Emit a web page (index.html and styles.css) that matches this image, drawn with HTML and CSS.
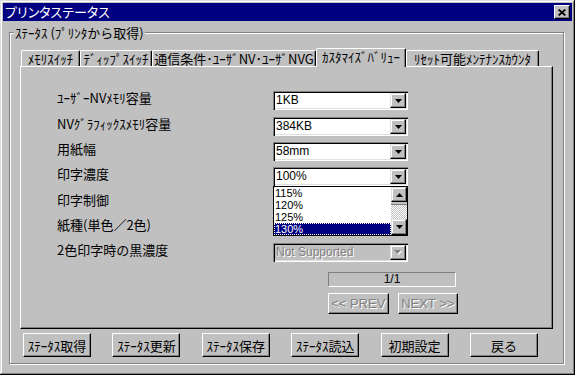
FILE: index.html
```html
<!DOCTYPE html>
<html lang="ja">
<head>
<meta charset="utf-8">
<title>プリンタステータス</title>
<link rel="stylesheet" href="styles.css">
</head>
<body>
<div class="window">
  <div class="titlebar">
    <span class="title">プリンタステータス</span>
    <span class="close"><svg width="8" height="7" viewBox="0 0 8 7"><path d="M0.6 0.5 L7.4 6.5 M7.4 0.5 L0.6 6.5" stroke="#000" stroke-width="1.7" fill="none"/></svg></span>
  </div>
  <div class="group">
    <span class="legend">ｽﾃｰﾀｽ (ﾌﾟﾘﾝﾀから取得)</span>
    <div class="tabs">
      <div class="tab t1">ﾒﾓﾘｽｲｯﾁ</div>
      <div class="tab t2">ﾃﾞｨｯﾌﾟｽｲｯﾁ</div>
      <div class="tab t3">通信条件･ﾕｰｻﾞNV･ﾕｰｻﾞNVG</div>
      <div class="tab t4 active">ｶｽﾀﾏｲｽﾞﾊﾞﾘｭｰ</div>
      <div class="tab t5">ﾘｾｯﾄ可能ﾒﾝﾃﾅﾝｽｶｳﾝﾀ</div>
    </div>
    <div class="panel">
      <div class="form">
        <div class="label">ﾕｰｻﾞｰNVﾒﾓﾘ容量</div>
        <div class="combo"><span class="value">1KB</span><span class="arrow"><svg width="7" height="4" viewBox="0 0 7 4"><polygon points="0,0 7,0 3.5,4" fill="#000"/></svg></span></div>
        <div class="label">NVｸﾞﾗﾌｨｯｸｽﾒﾓﾘ容量</div>
        <div class="combo"><span class="value">384KB</span><span class="arrow"><svg width="7" height="4" viewBox="0 0 7 4"><polygon points="0,0 7,0 3.5,4" fill="#000"/></svg></span></div>
        <div class="label">用紙幅</div>
        <div class="combo"><span class="value">58mm</span><span class="arrow"><svg width="7" height="4" viewBox="0 0 7 4"><polygon points="0,0 7,0 3.5,4" fill="#000"/></svg></span></div>
        <div class="label">印字濃度</div>
        <div class="combo open"><span class="value">100%</span><span class="arrow"><svg width="7" height="4" viewBox="0 0 7 4"><polygon points="0,0 7,0 3.5,4" fill="#000"/></svg></span>
          <div class="list">
            <div class="items">
              <div class="item">115%</div>
              <div class="item">120%</div>
              <div class="item">125%</div>
              <div class="item selected">130%</div>
            </div>
            <div class="scrollbar">
              <span class="sbtn up"><svg width="7" height="4" viewBox="0 0 7 4"><polygon points="0,4 7,4 3.5,0" fill="#000"/></svg></span>
              <span class="thumb"></span>
              <span class="track"></span>
              <span class="sbtn down"><svg width="7" height="4" viewBox="0 0 7 4"><polygon points="0,0 7,0 3.5,4" fill="#000"/></svg></span>
            </div>
          </div>
        </div>
        <div class="label">印字制御</div>
        <div class="empty"></div>
        <div class="label">紙種(単色／2色)</div>
        <div class="empty"></div>
        <div class="label">2色印字時の黒濃度</div>
        <div class="combo disabled"><span class="value">Not Supported</span><span class="arrow"><svg width="8" height="5" viewBox="0 0 8 5"><polygon points="1,1 8,1 4.5,5" fill="#fff"/><polygon points="0,0 7,0 3.5,4" fill="#808080"/></svg></span></div>
      </div>
      <div class="pager">
        <div class="indicator">1/1</div>
        <div class="navbtns">
          <span class="btn nav disabled-text">&lt;&lt; PREV</span>
          <span class="btn nav disabled-text">NEXT &gt;&gt;</span>
        </div>
      </div>
    </div>
    <div class="btnrow">
      <span class="btn action">ｽﾃｰﾀｽ取得</span>
      <span class="btn action">ｽﾃｰﾀｽ更新</span>
      <span class="btn action">ｽﾃｰﾀｽ保存</span>
      <span class="btn action">ｽﾃｰﾀｽ読込</span>
      <span class="btn action">初期設定</span>
      <span class="btn action">戻る</span>
    </div>
  </div>
</div>
</body>
</html>
```

FILE: styles.css
```css
* { box-sizing: border-box; }
html, body { margin: 0; padding: 0; }
body {
  width: 575px;
  height: 375px;
  overflow: hidden;
  background: #c0c0c0;
  font-family: "Noto Sans CJK JP", "Noto Sans", sans-serif;
  font-size: 13px;
  color: #000;
}
.window {
  width: 575px;
  height: 375px;
  background: #c0c0c0;
  padding: 3px;
  display: flex;
  flex-direction: column;
  box-shadow: inset -1px -1px 0 #000, inset 1px 1px 0 #dfdfdf, inset -2px -2px 0 #808080, inset 2px 2px 0 #fff;
}
.titlebar {
  height: 18px;
  flex: none;
  background: #000080;
  color: #fff;
  display: flex;
  align-items: center;
  justify-content: space-between;
  padding: 0 2px 0 2px;
}
.title {
  font-size: 13px;
  line-height: 18px;
  font-feature-settings: "palt";
}
.close {
  width: 16px;
  height: 14px;
  background: #c0c0c0;
  border: 1px solid;
  border-color: #fff #000 #000 #fff;
  box-shadow: inset -1px -1px 0 #808080;
  display: flex;
  align-items: center;
  justify-content: center;
}
.close svg { display: block; }
.group {
  position: relative;
  margin: 11px 8px 0 6px;
  height: 332px;
  flex: none;
  border: 1px solid #808080;
  box-shadow: inset 1px 1px 0 #fff, 1px 1px 0 #fff;
  padding: 15px 10px 0 10px;
}
.legend {
  position: absolute;
  top: -8px;
  left: 4px;
  padding: 0 1px;
  line-height: 15px;
  background: #c0c0c0;
}
.tabs {
  height: 18px;
  display: flex;
  align-items: flex-end;
  padding-left: 1px;
}
.tab {
  height: 16px;
  line-height: 15px;
  text-align: center;
  white-space: nowrap;
  background: #c0c0c0;
  border-top: 1px solid #fff;
  border-left: 1px solid #fff;
  border-right: 1px solid #000;
  border-radius: 2px 2px 0 0;
  box-shadow: inset -1px 0 0 #808080;
}
.t1 { width: 59px; }
.t2 { width: 72px; }
.t3 { width: 164px; }
.t4 { width: 90px; }
.t5 { width: 133px; }
.tab.active {
  height: 19px;
  margin-bottom: -1px;
  position: relative;
  z-index: 1;
  line-height: 15px;
}
.panel {
  height: 263px;
  border: 1px solid;
  border-color: #fff #000 #000 #fff;
  box-shadow: inset -1px -1px 0 #808080;
  padding: 24px 0 0 36px;
}
.form {
  display: grid;
  grid-template-columns: 216px 135px;
  grid-template-rows: 26px 25px 25px 26px 25px 25px 19px;
}
.label {
  line-height: 13px;
  white-space: nowrap;
}
.combo {
  position: relative;
  width: 135px;
  height: 19px;
  display: flex;
  padding: 2px;
  background: #fff;
  box-shadow: inset 1px 1px 0 #808080, inset 2px 2px 0 #000, inset -1px -1px 0 #fff, inset -2px -2px 0 #dfdfdf;
}
.value {
  flex: 1;
  padding-left: 1px;
  font-family: "Liberation Sans", "Noto Sans CJK JP", sans-serif;
  font-size: 12px;
  line-height: 15px;
  white-space: nowrap;
}
.arrow, .sbtn {
  width: 16px;
  height: 15px;
  flex: none;
  background: #c0c0c0;
  border: 1px solid;
  border-color: #dfdfdf #000 #000 #dfdfdf;
  box-shadow: inset -1px -1px 0 #808080, inset 1px 1px 0 #fff;
  display: flex;
  align-items: center;
  justify-content: center;
}
.arrow svg, .sbtn svg { display: block; }
.combo.disabled { background: #c0c0c0; }
.combo.disabled .value { color: #808080; text-shadow: 1px 1px 0 #fff; }
.list {
  position: absolute;
  left: 0;
  top: 19px;
  width: 135px;
  height: 50px;
  border: 1px solid #000;
  background: #fff;
  display: flex;
  z-index: 2;
}
.items { flex: 1; display: flex; flex-direction: column; }
.item {
  height: 12px;
  line-height: 12px;
  padding-left: 1px;
  font-family: "Liberation Sans", "Noto Sans CJK JP", sans-serif;
  font-size: 11px;
}
.item.selected {
  background: #000080;
  color: #fff;
  outline: 1px dotted #fff;
  outline-offset: -1px;
}
.scrollbar {
  width: 16px;
  display: flex;
  flex-direction: column;
}
.sbtn.up { height: 15px; }
.sbtn.down { height: 16px; }
.thumb {
  height: 3px;
  background: #c0c0c0;
  border-bottom: 1px solid #808080;
}
.track {
  flex: 1;
  background: repeating-conic-gradient(#c0c0c0 0 25%, #fff 0 50%) 0 0 / 2px 2px;
}
.pager {
  margin: 10px 0 0 271px;
  width: 130px;
  font-family: "Liberation Sans", "Noto Sans CJK JP", sans-serif;
  font-size: 12px;
}
.indicator {
  width: 128px;
  height: 15px;
  border: 1px solid;
  border-color: #808080 #fff #fff #808080;
  text-align: center;
  line-height: 13px;
}
.navbtns {
  margin-top: 6px;
  display: flex;
  gap: 9px;
}
.btn {
  display: flex;
  align-items: center;
  justify-content: center;
  white-space: nowrap;
  background: #c0c0c0;
  border: 1px solid;
  border-color: #fff #000 #000 #fff;
  box-shadow: inset -1px -1px 0 #808080;
}
.nav { width: 61px; height: 21px; font-size: 13px; }
.disabled-text { color: #808080; text-shadow: 1px 1px 0 #fff; }
.btnrow {
  margin: 4px 15px 0 3px;
  display: flex;
  justify-content: space-between;
}
.action { width: 68px; height: 24px; }
```
